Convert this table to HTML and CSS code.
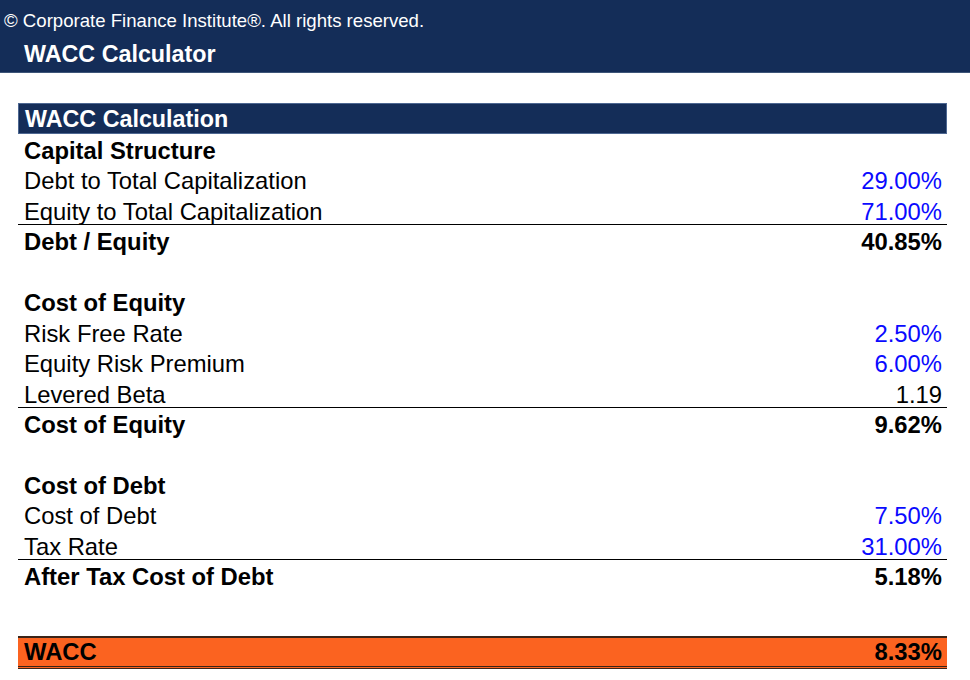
FILE: index.html
```html
<!DOCTYPE html>
<html>
<head>
<meta charset="utf-8">
<link rel="stylesheet" href="styles.css">
</head>
<body>
<header class="topbar">
  <div class="copyright">© Corporate Finance Institute®. All rights reserved.</div>
  <div class="title">WACC Calculator</div>
</header>
<main class="sheet">
  <div class="band">WACC Calculation</div>
  <div class="row head"><span>Capital Structure</span></div>
  <div class="row"><span>Debt to Total Capitalization</span><span class="input">29.00%</span></div>
  <div class="row rule"><span>Equity to Total Capitalization</span><span class="input">71.00%</span></div>
  <div class="row total"><span>Debt / Equity</span><span>40.85%</span></div>
  <div class="row"></div>
  <div class="row head"><span>Cost of Equity</span></div>
  <div class="row"><span>Risk Free Rate</span><span class="input">2.50%</span></div>
  <div class="row"><span>Equity Risk Premium</span><span class="input">6.00%</span></div>
  <div class="row rule"><span>Levered Beta</span><span>1.19</span></div>
  <div class="row total"><span>Cost of Equity</span><span>9.62%</span></div>
  <div class="row"></div>
  <div class="row head"><span>Cost of Debt</span></div>
  <div class="row"><span>Cost of Debt</span><span class="input">7.50%</span></div>
  <div class="row rule"><span>Tax Rate</span><span class="input">31.00%</span></div>
  <div class="row total"><span>After Tax Cost of Debt</span><span>5.18%</span></div>
  <div class="spacer"></div>
  <div class="wacc"><span>WACC</span><span>8.33%</span></div>
</main>
</body>
</html>
```
FILE: styles.css
```css
* { box-sizing: border-box; }
html, body { margin: 0; padding: 0; background: #ffffff; }
body {
  width: 970px;
  height: 680px;
  overflow: hidden;
  font-family: "Liberation Sans", Arial, sans-serif;
  color: #000000;
}
.topbar {
  background: #142d58;
  height: 73px;
  color: #ffffff;
  border-bottom: 1px solid #3d5578;
}
.copyright {
  font-size: 18.6px;
  line-height: 22px;
  padding: 10px 0 0 4px;
}
.title {
  font-size: 23.3px;
  font-weight: bold;
  line-height: 28px;
  padding: 8px 0 0 24px;
}
.sheet {
  margin: 30px 0 0 18px;
  width: 929px;
  font-size: 23.8px;
}
.band {
  background: #142d58;
  color: #ffffff;
  font-weight: bold;
  font-size: 23.3px;
  height: 31px;
  line-height: 28px;
  padding: 1px 0 0 6px;
  border: 1px solid #4d6791;
}
.row {
  height: 30.45px;
  display: flex;
  justify-content: space-between;
  padding: 3px 5px 0 6px;
  line-height: 27px;
  white-space: nowrap;
}
.row.head, .row.total { font-weight: bold; }
.row.rule { border-bottom: 1px solid #000000; }
.input { color: #0a0aff; }
.spacer { height: 45px; }
.wacc {
  height: 33px;
  display: flex;
  justify-content: space-between;
  background: #fb6320;
  font-weight: bold;
  border-top: 2px solid #3a2418;
  border-bottom: 3px double #3a2418;
  padding: 0 5px 0 6px;
  line-height: 27px;
}
```
